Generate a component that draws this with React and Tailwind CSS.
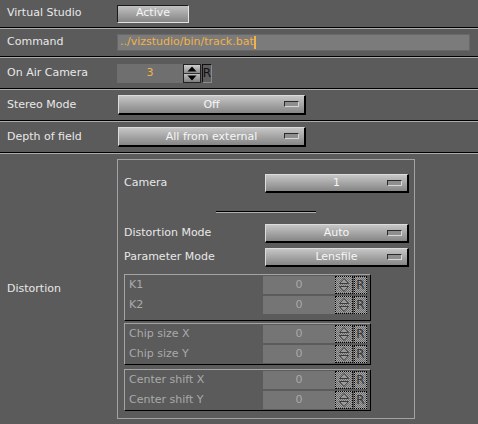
import React from "react";

const Sep = () => (
    <div>
        <div className="h-px bg-black" />
        <div className="h-px bg-[#acacac]" />
    </div>
);

const Dropdown = ({value, className = ""}) => (
    <div className={`relative flex items-center justify-center h-[19px] bg-linear-to-b from-[#c6c6c6] to-[#868686] border-t border-l border-[#dcdcdc] border-r-2 border-b-2 border-r-black border-b-black ${className}`}>
        <span className="text-[#f6f6f6] leading-none pb-px">{value}</span>
        <span className="absolute right-[5px] top-[5px] w-[15px] h-[6px] bg-[#8e8e8e] border border-t-[#2a2a2a] border-l-[#2a2a2a] border-r-[#d6d6d6] border-b-[#d6d6d6]" />
    </div>
);

const Tri = ({up, fill = "#000", stroke = "none"}) => (
    <svg width="10" height="6" viewBox="0 0 10 6">
        <path d={up ? "M5 0.5L9.5 5.5H0.5Z" : "M0.5 0.5H9.5L5 5.5Z"} fill={fill} stroke={stroke} strokeWidth="1" />
    </svg>
);

const Spinner = () => (
    <div className="flex items-center h-[19px]">
        <div className="flex flex-col w-[18px] h-full border border-[#222]">
            <div className="flex-1 flex items-center justify-center bg-linear-to-b from-[#cfcfcf] to-[#8c8c8c] border-b border-[#333]">
                <Tri up />
            </div>
            <div className="flex-1 flex items-center justify-center bg-linear-to-b from-[#c0c0c0] to-[#7e7e7e]">
                <Tri />
            </div>
        </div>
        <div className="ml-px w-[10px] h-full flex items-center justify-center bg-[#5e5e5e] border border-t-[#111] border-l-[#111] border-r-[#8a8a8a] border-b-[#8a8a8a] text-[#111] text-[12px]">
            R
        </div>
    </div>
);

const checker = "bg-[image:repeating-conic-gradient(#6c6c6c_0_25%,#a4a4a4_0_50%)] bg-[length:2px_2px]";

const ParamRow = ({label}) => (
    <div className="flex items-center h-[18px]">
        <div className="w-[138px] pl-[4px] text-[#aaaaaa]">{label}</div>
        <div className="w-[72px] h-full flex items-center justify-center bg-[#757575] text-[#a9a9a9]">0</div>
        <div className={`w-[18px] h-full flex flex-col border border-dotted border-black ${checker}`}>
            <div className="flex-1 flex items-center justify-center">
                <Tri up fill="#9a9a9a" stroke="#3c3c3c" />
            </div>
            <div className="flex-1 flex items-center justify-center">
                <Tri fill="#9a9a9a" stroke="#3c3c3c" />
            </div>
        </div>
        <div className={`ml-px w-[13px] h-full flex items-center justify-center border border-dotted border-black text-[12px] text-[#333333] ${checker}`}>
            R
        </div>
    </div>
);

const Group = ({labels, className = ""}) => (
    <div className={`w-[247px] flex flex-col gap-[2px] pt-px border border-t-[#a4a4a4] border-l-[#a4a4a4] border-r-black border-b-black ${className}`}>
        {labels.map(l => <ParamRow key={l} label={l} />)}
    </div>
);

export default function App() {
    return (
        <div className="w-[478px] h-[424px] bg-[#5b5b5b] text-[#e8e8e8] text-[11px] overflow-hidden" style={{fontFamily: '"DejaVu Sans", Verdana, sans-serif'}}>
            <div className="flex items-center h-[27px]">
                <div className="w-[117px] pl-[7px]">Virtual Studio</div>
                <div className="w-[72px] h-[18px] flex items-center justify-center bg-linear-to-b from-[#c2c2c2] to-[#858585] border border-t-[#1a1a1a] border-l-[#1a1a1a] border-r-[#e4e4e4] border-b-[#e4e4e4] text-[#f6f6f6]">
                    Active
                </div>
            </div>
            <Sep />
            <div className="flex items-center h-[27px]">
                <div className="w-[117px] pl-[7px]">Command</div>
                <div className="w-[353px] h-[17px] flex items-center pl-[2px] bg-[#7b7b7b] border border-[#686868] text-[#f2b24a]">
                    <span>../vizstudio/bin/track.bat</span>
                    <span className="w-[2px] h-[13px] bg-[#f2b24a]" />
                </div>
            </div>
            <Sep />
            <div className="flex items-center h-[30px]">
                <div className="w-[117px] pl-[7px]">On Air Camera</div>
                <div className="w-[66px] h-[19px] flex items-center justify-center bg-[#6f6f6f] text-[#f2b24a]">3</div>
                <Spinner />
            </div>
            <Sep />
            <div className="flex items-center h-[30px]">
                <div className="w-[118px] pl-[7px]">Stereo Mode</div>
                <Dropdown value="Off" className="w-[188px] h-[20px]" />
            </div>
            <Sep />
            <div className="flex items-center h-[30px]">
                <div className="w-[118px] pl-[7px]">Depth of field</div>
                <Dropdown value="All from external" className="w-[188px] h-[20px]" />
            </div>
            <Sep />
            <div className="flex h-[270px]">
                <div className="w-[117px] pl-[7px] self-center">Distortion</div>
                <div className="mt-[5px] w-[298px] h-[260px] border border-[#a2a2a2] pl-[6px] flex flex-col">
                    <div className="mt-[14px] flex items-center h-[19px]">
                        <div className="flex-1">Camera</div>
                        <Dropdown value="1" className="w-[144px] mr-[5px]" />
                    </div>
                    <div className="mt-[18px] self-center w-[100px] -translate-x-[3px]">
                        <div className="h-px bg-black" />
                        <div className="h-px bg-[#b0b0b0]" />
                    </div>
                    <div className="mt-[11px] flex items-center h-[19px]">
                        <div className="flex-1">Distortion Mode</div>
                        <Dropdown value="Auto" className="w-[144px] mr-[5px]" />
                    </div>
                    <div className="mt-[5px] flex items-center h-[19px]">
                        <div className="flex-1">Parameter Mode</div>
                        <Dropdown value="Lensfile" className="w-[144px] mr-[5px]" />
                    </div>
                    <Group labels={["K1", "K2"]} className="mt-[7px] pb-[6px]" />
                    <Group labels={["Chip size X", "Chip size Y"]} className="mt-[2px] pb-px" />
                    <Group labels={["Center shift X", "Center shift Y"]} className="mt-[4px] pb-px" />
                </div>
            </div>
        </div>
    );
}
